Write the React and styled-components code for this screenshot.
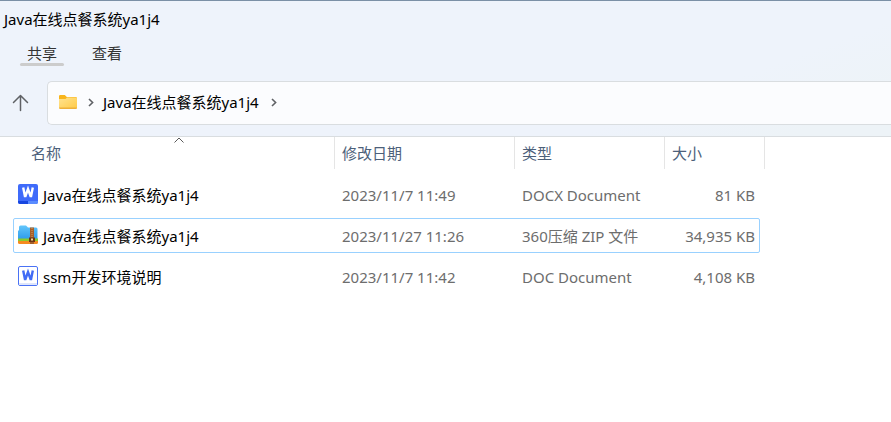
import React from 'react';
import styled, { createGlobalStyle, ThemeProvider } from 'styled-components'

const theme = {
    color: {
        chrome: '#eef3fb',
        chromeEnd: '#edf3f7',
        field: '#fbfcfe',
        line: '#d9dde0',
        column: '#e5e5e5',
        text: '#000000',
        tab: '#333333',
        heading: '#4c607a',
        muted: '#6d6d6d',
        icon: '#5f6165',
        focus: '#99d1ff',
    },
    fontSize: '15px',
}

const GlobalStyle = createGlobalStyle`
    * {
        box-sizing: border-box;
    }
    body {
        margin: 0;
        background: #ffffff;
        font-family: "Noto Sans", "Noto Sans CJK SC", sans-serif;
        font-size: ${props => props.theme.fontSize};
        line-height: 20px;
    }
    button {
        border: 0;
        padding: 0;
        background: none;
        color: inherit;
        font: inherit;
        white-space: nowrap;
    }
`

const Window = styled.div`
    min-height: 100vh;
    overflow: hidden;
`
const Chrome = styled.header`
    border-top: 1px solid #7b90a6;
    border-bottom: 1px solid ${props => props.theme.color.line};
    background: linear-gradient(160deg, ${props => props.theme.color.chrome} 75%, ${props => props.theme.color.chromeEnd} 92%);
`
const Title = styled.h1`
    margin: 0;
    padding: 8px 4px;
    color: ${props => props.theme.color.text};
    font-size: inherit;
    font-weight: 400;
`
const Tabs = styled.nav`
    display: flex;
    gap: 21px;
    padding: 6px 20px 0;
`
const Tab = styled.button`
    width: 44px;
    padding-bottom: 1px;
    color: ${props => props.theme.color.tab};

    &::after {
        content: "";
        display: block;
        height: 3px;
        border-radius: 2px;
        background: ${props => props.$active ? '#cccccc' : 'transparent'};
    }
`
const AddressRow = styled.div`
    display: flex;
    align-items: center;
    padding: 14px 0 11px 10px;
`
const UpButton = styled.button`
    display: flex;
    width: 37px;
    padding-left: 2px;
    color: ${props => props.theme.color.icon};
`
const AddressBar = styled.nav`
    display: flex;
    flex: 1;
    align-items: center;
    height: 44px;
    padding: 0 0 2px 10px;
    border: 1px solid ${props => props.theme.color.line};
    border-right: 0;
    border-radius: 5px 0 0 5px;
    background: ${props => props.theme.color.field};
`
const Crumb = styled.button`
    padding-right: 3px;
    color: ${props => props.theme.color.text};
`
const ChevronBox = styled.span`
    display: flex;
    justify-content: center;
    width: 25px;
    color: ${props => props.theme.color.icon};
`
const FileTable = styled.table`
    display: block;
`
const Head = styled.thead`
    display: block;
`
const HeadRow = styled.tr`
    display: grid;
    grid-template-columns: 311px 180px 150px 100px;
    margin-left: 24px;
`
const HeadCell = styled.th`
    position: relative;
    height: 32px;
    padding: 6px 7px;
    border-right: 1px solid ${props => props.theme.color.column};
    color: ${props => props.theme.color.heading};
    font-weight: 400;
    text-align: left;
`
const SortMark = styled.svg`
    position: absolute;
    top: 0;
    left: 50%;
    transform: translateX(-50%);
`
const Body = styled.tbody`
    display: grid;
    gap: 6px;
    padding: 8px 0 0 13px;
`
const FileRow = styled.tr`
    display: grid;
    grid-template-columns: 321px 180px 150px 94px;
    align-items: center;
    width: max-content;
    height: 35px;
    border: 1px solid ${props => props.$focused ? props.theme.color.focus : 'transparent'};
    border-radius: 2px;
`
const Cell = styled.td`
    padding: 0 7px;
    color: ${props => props.theme.color.muted};
    text-align: ${props => props.$right ? 'right' : 'left'};
    white-space: nowrap;

    &:last-child {
        padding-right: 4px;
    }
`
const NameCell = styled(Cell)`
    display: flex;
    align-items: center;
    gap: 5px;
    padding: 0 4px;
    color: ${props => props.theme.color.text};

    svg {
        margin-bottom: 2px;
    }
`

const UpArrow = () => (
    <svg width="17" height="18" viewBox="0 0 17 18" fill="none" stroke="currentColor" strokeWidth="1.5" strokeLinecap="round" strokeLinejoin="round">
        <path d="M8.5 16.5V1.5M1.5 8.5l7-7 7 7" />
    </svg>
)

const Chevron = () => (
    <svg width="6" height="9" viewBox="0 0 6 9" fill="none" stroke="currentColor" strokeWidth="1.6">
        <path d="M1 1l3.6 3.5L1 8" />
    </svg>
)

const FolderIcon = () => (
    <svg width="20" height="16" viewBox="0 0 20 16">
        <defs>
            <linearGradient id="folder" x1="0" y1="0" x2="1" y2="1">
                <stop offset="0" stopColor="#ffe391" />
                <stop offset="1" stopColor="#ffca45" />
            </linearGradient>
        </defs>
        <path d="M1 2.2A1.2 1.2 0 0 1 2.2 1h4.6l2 2h8.8A1.4 1.4 0 0 1 19 4.4V8H1z" fill="#f8b51c" />
        <path d="M1 5h6.5l1.5-1.5h8.8A1.2 1.2 0 0 1 19 4.7v9.1A1.2 1.2 0 0 1 17.8 15H2.2A1.2 1.2 0 0 1 1 13.8z" fill="url(#folder)" />
        <path d="M1 13.6h18a1.4 1.4 0 0 1-1.4 1.4H2.4A1.4 1.4 0 0 1 1 13.6z" fill="#eeb03a" />
    </svg>
)

const DocxIcon = () => (
    <svg width="20" height="20" viewBox="0 0 20 20">
        <rect width="20" height="20" rx="2" fill="#3f6bfa" />
        <path d="M0 17h10v3H2a2 2 0 0 1-2-2z" fill="#1746e0" />
        <path d="M10 17h10v1a2 2 0 0 1-2 2h-8z" fill="#5a8cff" />
        <path d="M5.2 3.5l1.7 8.5h.6L10 5l2.5 7h.6l1.7-8.500" fill="none" stroke="#ffffff" strokeWidth="2.4" />
    </svg>
)

const DocIcon = () => (
    <svg width="20" height="20" viewBox="0 0 20 20">
        <rect x="0.5" y="0.5" width="19" height="19" rx="1.5" fill="#ffffff" stroke="#4a72f5" />
        <path d="M1 17h18v2H1z" fill="#dfe6fb" />
        <path d="M5.2 4.500l1.7 8.500h.6L10 6l2.500 7h.6l1.700-8.500" fill="none" stroke="#416bf5" strokeWidth="2.4" />
    </svg>
)

const ZipIcon = () => (
    <svg width="20" height="20" viewBox="0 0 20 20">
        <defs>
            <linearGradient id="zip" x1="0" y1="0" x2="0" y2="1">
                <stop offset="0" stopColor="#62c6fb" />
                <stop offset="1" stopColor="#2f9cec" />
            </linearGradient>
        </defs>
        <path d="M1 2a1.500 1.500 0 0 1 1.500-1.500H8L10 2.500h8A1.500 1.500 0 0 1 19.500 4V14H0V6l1-1z" fill="url(#zip)" />
        <path d="M0 13.500h20V16H0z" fill="#8acb2c" />
        <path d="M0 16h20v1.500a1.500 1.500 0 0 1-1.500 1.500h-17A1.500 1.500 0 0 1 0 17.500z" fill="#f58a1f" />
        <path d="M12 2.500h4v16.500h-4z" fill="#a5602a" />
        <path d="M14 3v10" stroke="#d59a62" strokeWidth="1" strokeDasharray="1 1" />
        <path d="M11 12.500h6v4.500h-6z" fill="#6b3514" />
        <path d="M13 13.500h2v2h-2z" fill="#f6d79a" />
    </svg>
)

const tabs = ['共享', '查看']
const columns = ['名称', '修改日期', '类型', '大小']
const files = [
    { name: 'Java在线点餐系统ya1j4', date: '2023/11/7 11:49', type: 'DOCX Document', size: '81 KB', Icon: DocxIcon },
    { name: 'Java在线点餐系统ya1j4', date: '2023/11/27 11:26', type: '360压缩 ZIP 文件', size: '34,935 KB', Icon: ZipIcon, focused: true },
    { name: 'ssm开发环境说明', date: '2023/11/7 11:42', type: 'DOC Document', size: '4,108 KB', Icon: DocIcon },
]

const App = () => {
    return (
        <ThemeProvider theme={theme}>
            <GlobalStyle />
            <Window>
                <Chrome>
                    <Title>Java在线点餐系统ya1j4</Title>
                    <Tabs>
                        {tabs.map((tab, index) => (
                            <Tab key={tab} $active={index === 0}>{tab}</Tab>
                        ))}
                    </Tabs>
                    <AddressRow>
                        <UpButton><UpArrow /></UpButton>
                        <AddressBar>
                            <FolderIcon />
                            <ChevronBox><Chevron /></ChevronBox>
                            <Crumb>Java在线点餐系统ya1j4</Crumb>
                            <ChevronBox><Chevron /></ChevronBox>
                        </AddressBar>
                    </AddressRow>
                </Chrome>
                <FileTable>
                    <Head>
                        <HeadRow>
                            {columns.map((column, index) => (
                                <HeadCell key={column}>
                                    {index === 0 && (
                                        <SortMark width="11" height="6" viewBox="0 0 11 6" fill="none" stroke="#5a5a5a">
                                            <path d="M1 5.5l4.5-4.5L10 5.5" />
                                        </SortMark>
                                    )}
                                    <button>{column}</button>
                                </HeadCell>
                            ))}
                        </HeadRow>
                    </Head>
                    <Body>
                        {files.map(({ name, date, type, size, Icon, focused }) => (
                            <FileRow key={date} $focused={focused}>
                                <NameCell><Icon />{name}</NameCell>
                                <Cell>{date}</Cell>
                                <Cell>{type}</Cell>
                                <Cell $right>{size}</Cell>
                            </FileRow>
                        ))}
                    </Body>
                </FileTable>
            </Window>
        </ThemeProvider>
    );
};

export default App;
